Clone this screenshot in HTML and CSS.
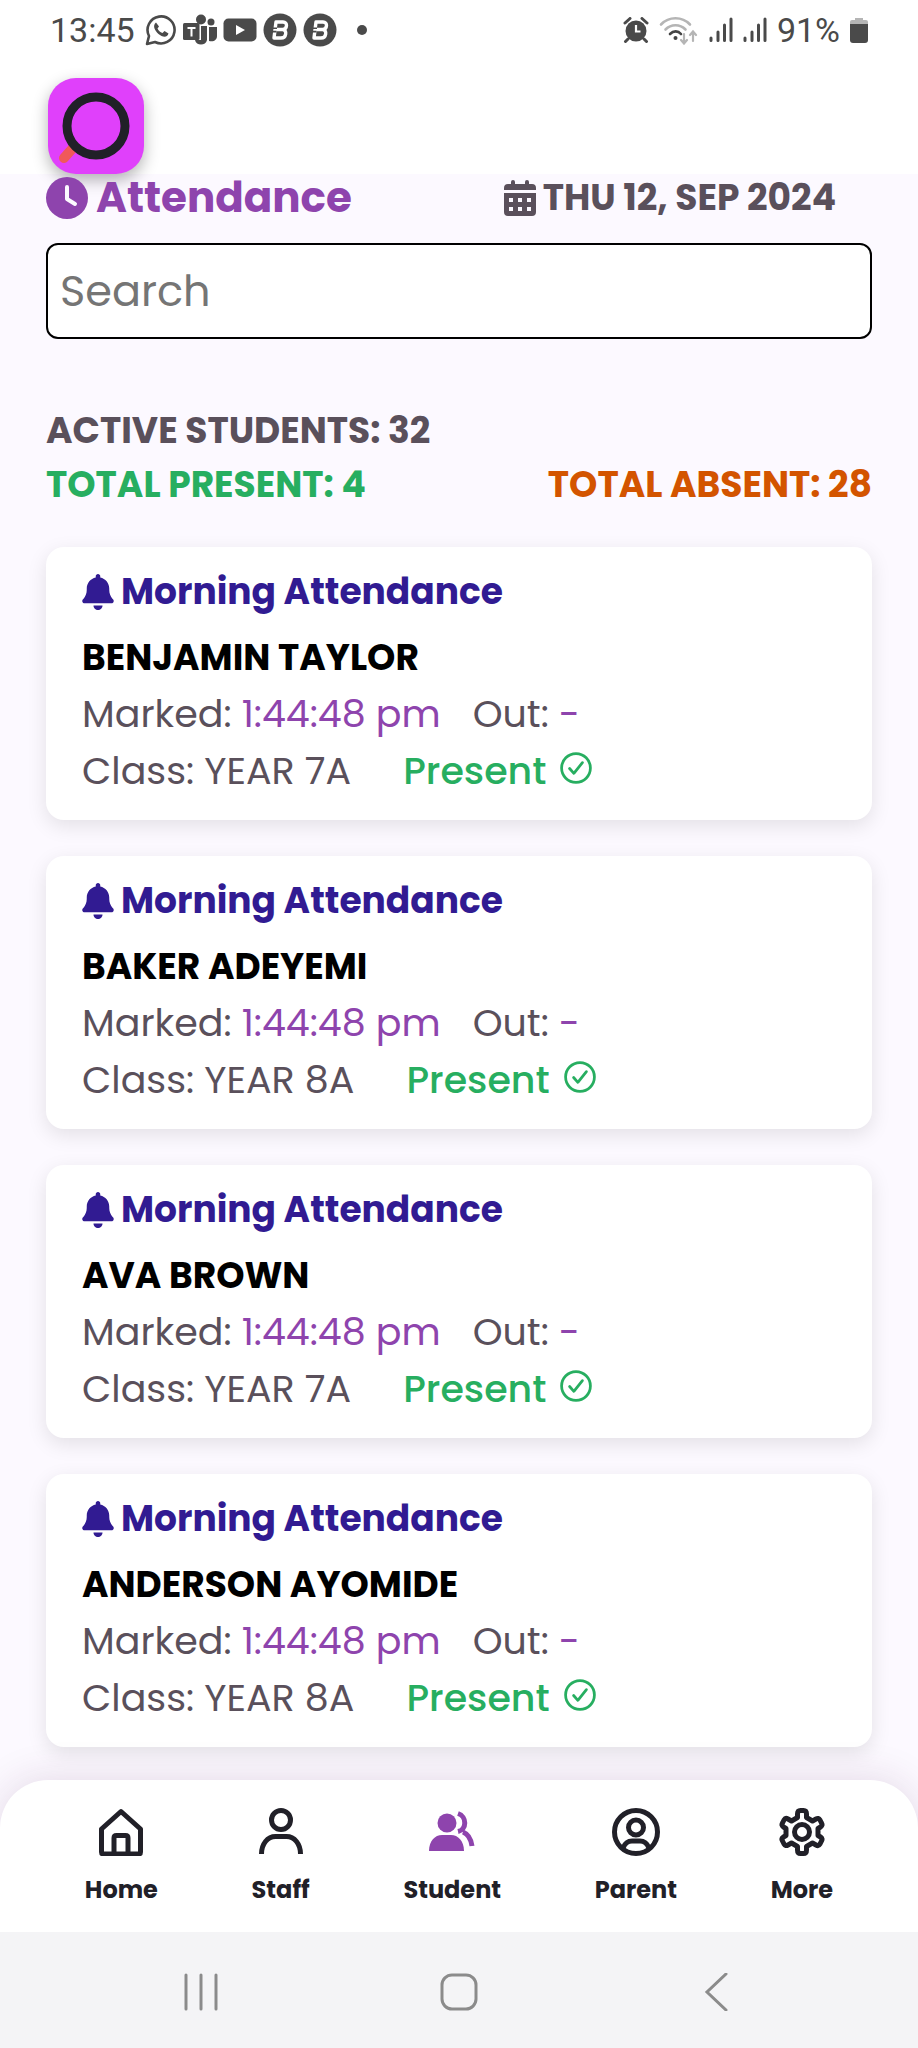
FILE: index.html
```html
<!DOCTYPE html>
<html lang="en">
<head>
    <meta charset="UTF-8">
    <meta name="viewport" content="width=device-width, initial-scale=1.0">
    <title>Attendance</title>
    <link rel="stylesheet" href="styles.css">
</head>
<body>
    <!-- shared icons -->
    <svg class="sprite" aria-hidden="true">
        <symbol id="bell" viewBox="0 0 448 512">
            <path fill="currentColor" d="M224 0c-17.700 0-32 14.300-32 32v19.200C119 66 64 130.600 64 208v18.800c0 47-17.300 92.400-48.500 127.600l-7.400 8.300c-8.400 9.400-10.400 22.900-5.300 34.400S19.400 416 32 416h384c12.600 0 24-7.400 29.200-18.900s3.100-25-5.300-34.400l-7.400-8.300C401.300 319.200 384 273.900 384 226.800V208c0-77.400-55-142-128-156.800V32c0-17.700-14.300-32-32-32zm45.300 493.300c12-12 18.700-28.300 18.700-45.300H160c0 17 6.700 33.300 18.700 45.300S207 512 224 512s33.300-6.700 45.300-18.700z"/>
        </symbol>
        <symbol id="check" viewBox="0 0 30 30">
            <circle cx="15" cy="15" r="13.500" fill="none" stroke="currentColor" stroke-width="2.600"/>
            <path d="M9 15.500l4 4.500 8-10" fill="none" stroke="currentColor" stroke-width="2.600" stroke-linecap="round" stroke-linejoin="round"/>
        </symbol>
        <symbol id="signal" viewBox="0 0 24 26">
            <path d="M2 21v2.500M9 15v8.500M15.500 8v15.500M22 2v21.500" stroke="currentColor" stroke-width="3" stroke-linecap="round"/>
        </symbol>
        <symbol id="app-b" viewBox="0 0 34 34">
            <circle cx="17" cy="17" r="16.500" fill="currentColor"/>
            <path d="M13 9h7c5 0 4.500 7-.5 7.500 5 .5 4 8.500-1.500 8.500h-7zM12.200 16.500H19" fill="none" stroke="#fff" stroke-width="3.400" stroke-linejoin="round"/>
            <path d="M9 15.200h5M8.500 18.600h5" stroke="currentColor" stroke-width="1.600"/>
        </symbol>
    </svg>

    <div class="status-bar">
        <div class="status-left">
            <span>13:45</span>
            <svg width="32" height="32" viewBox="0 0 32 32"><path d="M2 30l2-8A13.500 13.500 0 1 1 10 28z" fill="none" stroke="currentColor" stroke-width="2.600" stroke-linejoin="round"/><path d="M11 8.500c-4 3-1 8.500 2.500 11.500s8.500 4.500 10-.5l-4-2.500-2 2c-2.500-.8-4-2.300-5-4.500l1.500-2z" fill="currentColor"/></svg>
            <svg width="34" height="32" viewBox="0 0 34 32" fill="currentColor"><circle cx="18" cy="5.500" r="5"/><circle cx="28" cy="8" r="3.500"/><path d="M18 12h6v14c-1 6-11 6-12 0h6zM26 13h8v9c0 4-3 6-8 5z"/><rect x="0" y="9" width="16.500" height="17" rx="1.500"/><path d="M4.500 14h8M8.500 14v8.500" stroke="#fff" stroke-width="2"/></svg>
            <svg width="34" height="24" viewBox="0 0 34 24"><rect x=".5" y=".5" width="33" height="23" rx="5" fill="currentColor"/><path d="M13 7l9 5-9 5z" fill="#fff"/></svg>
            <svg width="34" height="34"><use href="#app-b"/></svg>
            <svg width="34" height="34"><use href="#app-b"/></svg>
            <i class="dot"></i>
        </div>
        <div class="status-right">
            <svg width="26" height="26" viewBox="0 0 26 26"><circle cx="13" cy="14" r="10.500" fill="currentColor"/><path d="M2 6l5-4.500M24 6l-5-4.500M5 22l-2.500 2.500M21 22l2.500 2.500" stroke="currentColor" stroke-width="3" stroke-linecap="round"/><path d="M13 8v6.500h4.500" fill="none" stroke="#fff" stroke-width="2.200"/></svg>
            <svg width="40" height="30" viewBox="0 0 40 30" fill="none" stroke-linecap="round"><path d="M2 9.500a20 20 0 0 1 29 0M6.500 14.500a14 14 0 0 1 20 0" stroke="#b5b5b5" stroke-width="2.600"/><path d="M11 19c3.500-3.500 8-3.500 11 0" stroke="#444" stroke-width="2.600"/><circle cx="16.500" cy="23" r="2" fill="#444"/><path d="M25 19v9m-3-3l3 3.500 3-3.500M34 26v-9m-3 3l3-3.500 3 3.500" stroke="#b5b5b5" stroke-width="2.200"/></svg>
            <svg width="24" height="26"><use href="#signal"/></svg>
            <svg width="24" height="26"><use href="#signal"/></svg>
            <span>91%</span>
            <svg width="18" height="26" viewBox="0 0 18 26"><path d="M5 3V1h8v2h3q2 0 2 2v3H0V5q0-2 2-2z" fill="#b5b5b5"/><path d="M0 7h18v16q0 3-3 3H3q-3 0-3-3z" fill="currentColor"/></svg>
        </div>
    </div>

    <header class="app-bar">
        <svg class="logo" viewBox="0 0 96 96">
            <path d="M24 71l-8 9" stroke="#f0595a" stroke-width="10" stroke-linecap="round"/>
            <circle cx="48" cy="48" r="29" fill="none" stroke="#212028" stroke-width="9"/>
        </svg>
    </header>

    <main class="content">
        <div class="title-row">
            <h1>
                <svg width="42" height="42" viewBox="0 0 42 42"><circle cx="21" cy="21" r="21" fill="currentColor"/><path d="M21 10v12l8 5" fill="none" stroke="#fcf9ff" stroke-width="4" stroke-linecap="round" stroke-linejoin="round"/></svg>
                Attendance
            </h1>
            <div class="date">
                <svg width="32" height="36" viewBox="0 0 32 36" fill="currentColor"><path d="M7 4V2q0-2 2-2t2 2v2h10V2q0-2 2-2t2 2v2h3q4 0 4 4v2H0V8q0-4 4-4z"/><path fill-rule="evenodd" d="M0 13h32v19q0 4-4 4H4q-4 0-4-4zm5 5v4h4v-4zm9 0v4h4v-4zm9 0v4h4v-4zM5 27v4h4v-4zm9 0v4h4v-4zm9 0v4h4v-4z"/></svg>
                THU 12, SEP 2024
            </div>
        </div>

        <input class="search" type="search" placeholder="Search" aria-label="Search">

        <div class="totals">
            <div class="active-total">ACTIVE STUDENTS: 32</div>
            <div class="present-total">TOTAL PRESENT: 4</div>
            <div class="absent-total">TOTAL ABSENT: 28</div>
        </div>

        <div class="cards">
            <article class="card">
                <h2><svg width="32" height="36"><use href="#bell"/></svg>Morning Attendance</h2>
                <h3>BENJAMIN TAYLOR</h3>
                <p><span>Marked: <b>1:44:48 pm</b></span><span>Out: <b>-</b></span></p>
                <p class="class-row"><span>Class: YEAR 7A</span><span class="present">Present <svg width="32" height="32"><use href="#check"/></svg></span></p>
            </article>
            <article class="card">
                <h2><svg width="32" height="36"><use href="#bell"/></svg>Morning Attendance</h2>
                <h3>BAKER ADEYEMI</h3>
                <p><span>Marked: <b>1:44:48 pm</b></span><span>Out: <b>-</b></span></p>
                <p class="class-row"><span>Class: YEAR 8A</span><span class="present">Present <svg width="32" height="32"><use href="#check"/></svg></span></p>
            </article>
            <article class="card">
                <h2><svg width="32" height="36"><use href="#bell"/></svg>Morning Attendance</h2>
                <h3>AVA BROWN</h3>
                <p><span>Marked: <b>1:44:48 pm</b></span><span>Out: <b>-</b></span></p>
                <p class="class-row"><span>Class: YEAR 7A</span><span class="present">Present <svg width="32" height="32"><use href="#check"/></svg></span></p>
            </article>
            <article class="card">
                <h2><svg width="32" height="36"><use href="#bell"/></svg>Morning Attendance</h2>
                <h3>ANDERSON AYOMIDE</h3>
                <p><span>Marked: <b>1:44:48 pm</b></span><span>Out: <b>-</b></span></p>
                <p class="class-row"><span>Class: YEAR 8A</span><span class="present">Present <svg width="32" height="32"><use href="#check"/></svg></span></p>
            </article>
        </div>
    </main>

    <nav class="tab-bar">
        <a href="#home">
            <svg viewBox="0 0 48 48"><path d="M24 3.500L4.500 21v23q0 2 2 2h35q2 0 2-2V21zM17 46V30q0-2.500 2.500-2.500h9Q31 27.500 31 30v16"/></svg>
            Home
        </a>
        <a href="#staff">
            <svg viewBox="0 0 48 48"><circle cx="24" cy="12" r="9.500"/><path d="M4.500 46c0-10 6-17.500 14-17.500h11c8 0 14 7.500 14 17.500"/></svg>
            Staff
        </a>
        <a href="#student" class="active">
            <svg viewBox="0 0 48 48"><g fill="currentColor" stroke="none"><circle cx="19" cy="15" r="9.500"/><path d="M1 43c0-10 6-16 13-16h9c7 0 13 6 13 16z"/></g><path d="M30 5.500c9 3 9 16 0 18M35 24c5 2 8 7 9 14"/></svg>
            Student
        </a>
        <a href="#parent">
            <svg viewBox="0 0 48 48"><circle cx="24" cy="24" r="21.500"/><circle cx="24" cy="19.500" r="7.500"/><path d="M11 40c2-5 5-7 9-7h8c4 0 7 2 9 7"/></svg>
            Parent
        </a>
        <a href="#more">
            <svg viewBox="0 0 48 48"><circle cx="24" cy="24" r="7.500"/><path d="M19.500 6q0-3.500 3-3.500h3q3 0 3 3.500v3.500l6 3.500 3.500-2q2.500-1.500 4 1l1.500 3q1.500 2.500-1 4l-2.500 1.500v7l2.500 1.500q2.500 1.500 1 4l-1.500 3q-1.500 2.500-4 1l-3.500-2-6 3.500V42q0 3.500-3 3.500h-3q-3 0-3-3.500v-3.500l-6-3.500-3.500 2q-2.500 1.500-4-1l-1.500-3q-1.500-2.500 1-4L8 27.500v-7L5.500 19q-2.500-1.500-1-4L6 12q1.500-2.500 4-1l3.500 2 6-3.500z"/></svg>
            More
        </a>
    </nav>

    <div class="system-nav">
        <button aria-label="Recent apps"><svg width="38" height="38" viewBox="0 0 38 38"><path d="M4 2v34M19 2v34M34 2v34"/></svg></button>
        <button aria-label="Home screen"><svg width="38" height="38" viewBox="0 0 38 38"><rect x="2" y="2" width="34" height="34" rx="10"/></svg></button>
        <button aria-label="Back"><svg width="38" height="38" viewBox="0 0 38 38"><path d="M28 1L9 19l19 18"/></svg></button>
    </div>
</body>
</html>
```
FILE: styles.css
```css
* {
    box-sizing: border-box;
}

body {
    margin: 0;
    min-height: 100vh;
    display: flex;
    flex-direction: column;
    background: #fcf9ff;
    color: #5a505b;
    font-family: Poppins, Inter, sans-serif;
}

h1, h2, h3, p {
    margin: 0;
}

.sprite {
    display: none;
}

/* phone status bar */
.status-bar {
    display: flex;
    justify-content: space-between;
    align-items: center;
    height: 60px;
    padding: 0 50px;
    background: #fff;
    color: #4a4a4a;
    font-family: Roboto, sans-serif;
    font-size: 34px;
}

.status-left, .status-right {
    display: flex;
    align-items: center;
    gap: 6px;
}

.status-left span {
    margin-right: 4px;
}

.status-right {
    gap: 10px;
}

.dot {
    width: 10px;
    height: 10px;
    margin-left: 14px;
    border-radius: 50%;
    background: #4a4a4a;
}

.app-bar {
    height: 114px;
    padding: 18px 48px 0;
    background: #fff;
}

.logo {
    display: block;
    width: 96px;
    height: 96px;
    border-radius: 28px;
    background: #e040fb;
    box-shadow: 0 6px 16px rgba(0, 0, 0, 0.3);
}

.content {
    flex: 1;
    padding: 0 46px 32px;
}

.title-row {
    display: flex;
    justify-content: space-between;
    align-items: center;
    height: 48px;
    padding-right: 36px;
}

.title-row h1, .date {
    display: flex;
    align-items: center;
}

.title-row h1 {
    gap: 8px;
    color: #8e44ad;
    font-size: 42px;
    line-height: 50px;
}

.date {
    gap: 7px;
    font-size: 36px;
    font-weight: 700;
    line-height: 46px;
}

.search {
    display: block;
    width: 100%;
    height: 96px;
    margin-top: 21px;
    padding: 0 12px;
    border: 2px solid #000;
    border-radius: 12px;
    background: #fff;
    font: 43px Poppins, Inter, sans-serif;
    color: #000;
}

.search::placeholder {
    color: #757575;
}

.totals {
    display: grid;
    grid-template-columns: auto auto;
    justify-content: space-between;
    margin-top: 65px;
    font-size: 36px;
    font-weight: 700;
    line-height: 54px;
}

.active-total {
    grid-column: 1 / 3;
}

.present-total {
    color: #27ae60;
}

.absent-total {
    color: #d35400;
}

.cards {
    display: flex;
    flex-direction: column;
    gap: 36px;
    margin-top: 35px;
}

.card {
    padding: 18px 36px 21px;
    border-radius: 18px;
    background: #fff;
    box-shadow: 0 6px 20px rgba(0, 0, 0, 0.1);
}

.card h2 {
    display: flex;
    align-items: center;
    gap: 7px;
    color: #311b92;
    font-size: 36px;
    line-height: 54px;
}

.card h3 {
    margin-top: 12px;
    color: #000;
    font-size: 36px;
    line-height: 54px;
}

.card p {
    display: flex;
    gap: 32px;
    font-size: 38px;
    line-height: 57px;
}

.card b {
    color: #8e44ad;
    font-weight: 400;
}

.card .class-row {
    gap: 52px;
}

.card .present {
    display: flex;
    align-items: center;
    gap: 14px;
    color: #27ae60;
    font-weight: 500;
}

.card .present svg {
    margin-bottom: 6px;
}

/* bottom tabs */
.tab-bar {
    display: flex;
    justify-content: space-around;
    height: 152px;
    padding: 28px 38px 0;
    border-radius: 48px 48px 0 0;
    background: #fff;
    box-shadow: 0 0 40px rgba(80, 30, 80, 0.15);
}

.tab-bar a {
    display: flex;
    flex-direction: column;
    align-items: center;
    gap: 16px;
    color: #212028;
    font-size: 24px;
    font-weight: 700;
    line-height: 36px;
    text-decoration: none;
}

.tab-bar a.active svg {
    color: #8e44ad;
}

.tab-bar svg {
    width: 48px;
    height: 48px;
    fill: none;
    stroke: currentColor;
    stroke-width: 5;
    stroke-linejoin: round;
}

.system-nav {
    display: flex;
    justify-content: space-around;
    align-items: center;
    height: 116px;
    padding: 4px 72px 0;
    background: #f4f4f6;
}

.system-nav button {
    display: flex;
    padding: 12px;
    border: 0;
    background: none;
}

.system-nav svg {
    fill: none;
    stroke: #8b8b8b;
    stroke-width: 3;
    stroke-linecap: round;
}
```
